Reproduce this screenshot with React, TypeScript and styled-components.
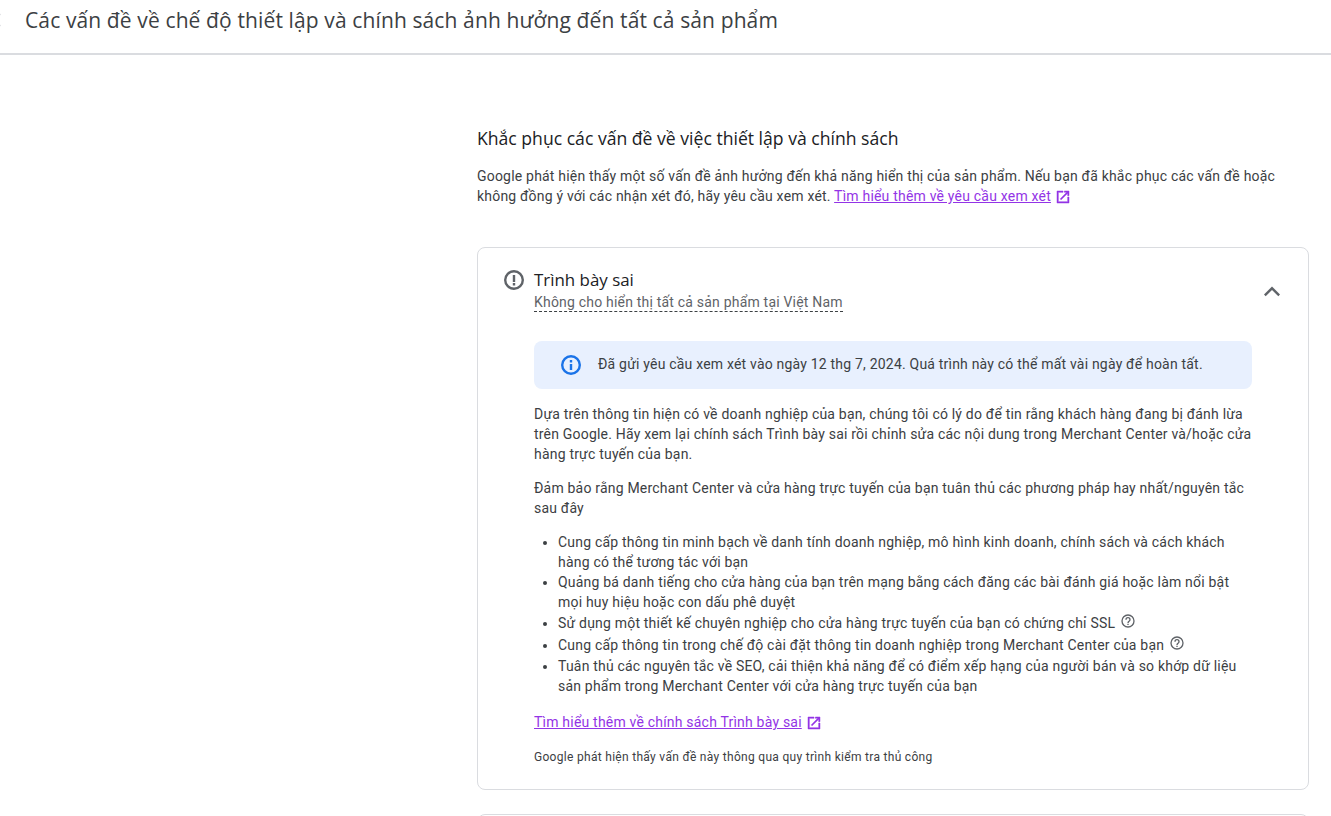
import styled, { createGlobalStyle } from "styled-components";

const GlobalStyle = createGlobalStyle`
  html, body {
    margin: 0;
    height: 816px;
    overflow: hidden;
    background: #fff;
    font-family: Roboto, "Liberation Sans", sans-serif;
    color: #3c4043;
  }
`;

const Header = styled.header`
  position: relative;
  height: 53px;
  padding-left: 25px;
  display: flex;
  align-items: center;
  border-bottom: 2px solid #dadce0;
  box-sizing: content-box;
`;

const CloseIcon = styled.svg`
  position: absolute;
  left: -18px;
  top: 8px;
  width: 24px;
  height: 24px;
  fill: #dadce0;
`;

const PageTitle = styled.h1`
  margin: 0 0 14px;
  font-family: "Open Sans", sans-serif;
  font-size: 21px;
  font-weight: 400;
  letter-spacing: 0.12px;
  line-height: 28px;
  color: #3c4043;
  white-space: nowrap;
`;

const Main = styled.main`
  width: 832px;
  margin-left: 477px;
  padding-top: 71px;
`;

const SectionTitle = styled.h2`
  margin: 0 0 16px;
  font-family: "Open Sans", sans-serif;
  font-size: 17.6px;
  font-weight: 400;
  line-height: 24px;
  color: #202124;
`;

const Paragraph = styled.p`
  margin: 0;
  font-size: 14px;
  line-height: 20px;
  letter-spacing: 0.2px;
`;

const Link = styled.a`
  color: #9334e6;
  text-decoration: underline;
`;

const External = styled.svg`
  width: 16px;
  height: 16px;
  margin-left: 4px;
  vertical-align: -4px;
  fill: #9334e6;
`;

const Card = styled.section`
  box-sizing: border-box;
  height: 543px;
  margin-top: 41px;
  padding: 20px 56px 0 24px;
  border: 1px solid #dadce0;
  border-radius: 8px;
`;

const SecondCard = styled(Card)`
  margin-top: 24px;
`;

const CardHead = styled.div`
  display: flex;
  align-items: flex-start;
  gap: 8px;
`;

const AlertIcon = styled.svg`
  width: 24px;
  height: 24px;
  fill: #5f6368;
`;

const HeadText = styled.div`
  flex: 1;
`;

const CardTitle = styled.div`
  font-family: "Open Sans", sans-serif;
  font-size: 16.9px;
  line-height: 24px;
  color: #202124;
`;

const CardSubtitle = styled.span`
  display: inline-block;
  font-size: 14px;
  line-height: 18px;
  letter-spacing: 0.2px;
  color: #5f6368;
  border-bottom: 1px dashed #3c4043;
`;

const Chevron = styled.svg`
  position: relative;
  left: 32px;
  top: 11px;
  width: 24px;
  height: 24px;
  fill: #5f6368;
`;

const CardBody = styled.div`
  margin-left: 32px;
  margin-top: 29px;
`;

const Notice = styled.div`
  display: flex;
  align-items: center;
  gap: 15px;
  height: 48px;
  box-sizing: border-box;
  padding: 0 0 2px 25px;
  border-radius: 8px;
  background: #e8f0fe;
  font-size: 14px;
  letter-spacing: 0.2px;
`;

const InfoIcon = styled.svg`
  width: 24px;
  height: 24px;
  margin-top: 2px;
  fill: #1a73e8;
`;

const BodyParagraph = styled(Paragraph)`
  margin-top: 14px;
`;

const FirstParagraph = styled(BodyParagraph)`
  margin-top: 15px;
`;

const BulletList = styled.ul`
  margin: 14px 0 0;
  padding-left: 24px;
  font-size: 14px;
  line-height: 20px;
  letter-spacing: 0.2px;
`;

const Bullet = styled.li<{ $hasHelp?: boolean }>`
  padding-right: 8px;
  line-height: ${(p) => (p.$hasHelp ? "22px" : "20px")};
`;

const HelpIcon = styled.svg`
  width: 16px;
  height: 16px;
  margin-left: 5px;
  vertical-align: -1px;
  fill: #5f6368;
`;

const LearnMore = styled(Paragraph)`
  margin-top: 16px;
`;

const Footnote = styled.p`
  margin: 17px 0 0;
  font-size: 12px;
  line-height: 16px;
  letter-spacing: 0.3px;
  color: #3c4043;
`;

const ExternalIcon = () => (
  <External viewBox="0 0 24 24">
    <path d="M19 19H5V5h7V3H3v18h18v-9h-2v7zM14 3v2h3.59l-9.83 9.83 1.41 1.41L19 6.41V10h2V3h-7z" stroke="#9334e6" strokeWidth="0.7" />
  </External>
);

const Help = () => (
  <HelpIcon viewBox="0 0 24 24">
    <path d="M11 18h2v-2h-2v2zm1-16a10 10 0 1 0 0 20 10 10 0 0 0 0-20zm0 18a8 8 0 1 1 0-16 8 8 0 0 1 0 16zm0-14a4 4 0 0 0-4 4h2a2 2 0 1 1 4 0c0 2-3 1.75-3 5h2c0-2.25 3-2.5 3-5a4 4 0 0 0-4-4z" />
  </HelpIcon>
);

const App = () => (
  <>
    <GlobalStyle />
    <Header>
      <CloseIcon viewBox="0 0 24 24">
        <path d="M19 6.41 17.59 5 12 10.59 6.41 5 5 6.41 10.59 12 5 17.59 6.41 19 12 13.41 17.59 19 19 17.59 13.41 12z" />
      </CloseIcon>
      <PageTitle>Các vấn đề về chế độ thiết lập và chính sách ảnh hưởng đến tất cả sản phẩm</PageTitle>
    </Header>
    <Main>
      <SectionTitle>Khắc phục các vấn đề về việc thiết lập và chính sách</SectionTitle>
      <Paragraph>
        Google phát hiện thấy một số vấn đề ảnh hưởng đến khả năng hiển thị của sản phẩm. Nếu bạn đã khắc phục các vấn đề hoặc
        không đồng ý với các nhận xét đó, hãy yêu cầu xem xét. <Link href="#">Tìm hiểu thêm về yêu cầu xem xét</Link>
        <ExternalIcon />
      </Paragraph>
      <Card>
        <CardHead>
          <AlertIcon viewBox="0 0 24 24">
            <path d="M10.8 7h2.4v7h-2.4zm0 8h2.4v2.4h-2.4zm1.2-13a10 10 0 1 0 0 20 10 10 0 0 0 0-20zm0 17.6a7.6 7.6 0 1 1 0-15.2 7.6 7.6 0 0 1 0 15.2z" />
          </AlertIcon>
          <HeadText>
            <CardTitle>Trình bày sai</CardTitle>
            <CardSubtitle>Không cho hiển thị tất cả sản phẩm tại Việt Nam</CardSubtitle>
          </HeadText>
          <Chevron viewBox="0 0 24 24">
            <path d="M12 7.6l-8 8 1.7 1.7 6.3-6.3 6.3 6.3 1.7-1.7z" />
          </Chevron>
        </CardHead>
        <CardBody>
          <Notice>
            <InfoIcon viewBox="0 0 24 24">
              <path d="M10.8 7h2.4v2.4h-2.4zm0 4h2.4v6h-2.4zm1.2-9a10 10 0 1 0 0 20 10 10 0 0 0 0-20zm0 17.6a7.6 7.6 0 1 1 0-15.2 7.6 7.6 0 0 1 0 15.2z" />
            </InfoIcon>
            Đã gửi yêu cầu xem xét vào ngày 12 thg 7, 2024. Quá trình này có thể mất vài ngày để hoàn tất.
          </Notice>
          <FirstParagraph>
            Dựa trên thông tin hiện có về doanh nghiệp của bạn, chúng tôi có lý do để tin rằng khách hàng đang bị đánh lừa
            trên Google. Hãy xem lại chính sách Trình bày sai rồi chỉnh sửa các nội dung trong Merchant Center và/hoặc cửa
            hàng trực tuyến của bạn.
          </FirstParagraph>
          <BodyParagraph>
            Đảm bảo rằng Merchant Center và cửa hàng trực tuyến của bạn tuân thủ các phương pháp hay nhất/nguyên tắc sau đây
          </BodyParagraph>
          <BulletList>
            <Bullet>
              Cung cấp thông tin minh bạch về danh tính doanh nghiệp, mô hình kinh doanh, chính sách và cách khách hàng có thể
              tương tác với bạn
            </Bullet>
            <Bullet>
              Quảng bá danh tiếng cho cửa hàng của bạn trên mạng bằng cách đăng các bài đánh giá hoặc làm nổi bật mọi huy hiệu
              hoặc con dấu phê duyệt
            </Bullet>
            <Bullet $hasHelp>
              Sử dụng một thiết kế chuyên nghiệp cho cửa hàng trực tuyến của bạn có chứng chỉ SSL
              <Help />
            </Bullet>
            <Bullet $hasHelp>
              Cung cấp thông tin trong chế độ cài đặt thông tin doanh nghiệp trong Merchant Center của bạn
              <Help />
            </Bullet>
            <Bullet>
              Tuân thủ các nguyên tắc về SEO, cải thiện khả năng để có điểm xếp hạng của người bán và so khớp dữ liệu sản phẩm
              trong Merchant Center với cửa hàng trực tuyến của bạn
            </Bullet>
          </BulletList>
          <LearnMore>
            <Link href="#">Tìm hiểu thêm về chính sách Trình bày sai</Link>
            <ExternalIcon />
          </LearnMore>
          <Footnote>Google phát hiện thấy vấn đề này thông qua quy trình kiểm tra thủ công</Footnote>
        </CardBody>
      </Card>
      <SecondCard />
    </Main>
  </>
);

export default App;
